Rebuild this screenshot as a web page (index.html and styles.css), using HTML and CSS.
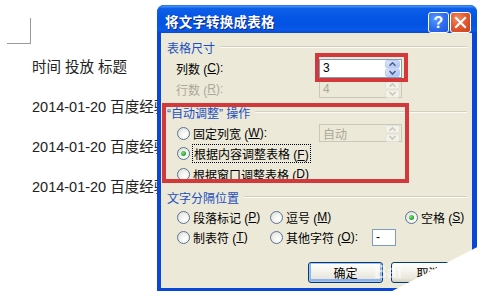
FILE: index.html
```html
<!DOCTYPE html>
<html lang="zh-CN">
<head>
<meta charset="utf-8">
<title>将文字转换成表格</title>
<link rel="stylesheet" href="styles.css">
</head>
<body>
<div class="page">
  <div class="doc">
    <div class="corner"></div>
    <p class="line">时间 投放 标题</p>
    <p class="line">2014-01-20 百度经验</p>
    <p class="line">2014-01-20 百度经验</p>
    <p class="line">2014-01-20 百度经验</p>
  </div>

  <div class="dialog">
    <div class="titlebar">
      <span class="title">将文字转换成表格</span>
      <div class="tbtns">
        <span class="tb help">?</span>
        <span class="tb close"><svg width="13" height="13" viewBox="0 0 13 13"><path d="M2 2 L11 11 M11 2 L2 11" stroke="#fff" stroke-width="2.2" stroke-linecap="square"/></svg></span>
      </div>
    </div>
    <div class="frame">
      <div class="body">
        <div class="legend l1"><span>表格尺寸</span><i></i></div>
        <div class="row r1">
          <span class="lab">列数 (<u>C</u>):</span>
          <div class="spin"><span class="val">3</span>
            <svg class="arr" width="15" height="17" viewBox="0 0 15 17"><defs><linearGradient id="sg" x1="0" y1="0" x2="1" y2="1"><stop offset="0" stop-color="#e2eafc"/><stop offset="1" stop-color="#a8bff2"/></linearGradient></defs><rect x="0.5" y="0.5" width="14" height="7.5" rx="2" fill="url(#sg)" stroke="#b8cbf4"/><rect x="0.5" y="9" width="14" height="7.5" rx="2" fill="url(#sg)" stroke="#b8cbf4"/><path d="M4.5 5.8 L7.5 2.8 L10.5 5.8" stroke="#4d6185" stroke-width="1.6" fill="none"/><path d="M4.5 11 L7.5 14 L10.5 11" stroke="#4d6185" stroke-width="1.6" fill="none"/></svg>
          </div>
        </div>
        <div class="row r2 dis">
          <span class="lab">行数 (<u>R</u>):</span>
          <div class="spin off"><span class="val">4</span>
            <svg class="arr" width="15" height="17" viewBox="0 0 15 17"><rect x="0.5" y="0.5" width="14" height="7.5" rx="2" fill="#f3f2ea" stroke="#e2e0d4"/><rect x="0.5" y="9" width="14" height="7.5" rx="2" fill="#f3f2ea" stroke="#e2e0d4"/><path d="M4.5 5.8 L7.5 2.8 L10.5 5.8" stroke="#c9c7ba" stroke-width="1.6" fill="none"/><path d="M4.5 11 L7.5 14 L10.5 11" stroke="#c9c7ba" stroke-width="1.6" fill="none"/></svg>
          </div>
        </div>

        <div class="legend l2"><span>“自动调整” 操作</span><i></i></div>
        <div class="row rr1">
          <span class="lab rl"><span class="radio"></span>固定列宽 (<u>W</u>):</span>
          <div class="spin off"><span class="val">自动</span>
            <svg class="arr" width="15" height="17" viewBox="0 0 15 17"><rect x="0.5" y="0.5" width="14" height="7.5" rx="2" fill="#f3f2ea" stroke="#e2e0d4"/><rect x="0.5" y="9" width="14" height="7.5" rx="2" fill="#f3f2ea" stroke="#e2e0d4"/><path d="M4.5 5.8 L7.5 2.8 L10.5 5.8" stroke="#c9c7ba" stroke-width="1.6" fill="none"/><path d="M4.5 11 L7.5 14 L10.5 11" stroke="#c9c7ba" stroke-width="1.6" fill="none"/></svg>
          </div>
        </div>
        <div class="row rr2">
          <span class="lab rl"><span class="radio on"></span><span class="focus">根据内容调整表格 (<u>F</u>)</span></span>
        </div>
        <div class="row rr3">
          <span class="lab rl"><span class="radio"></span>根据窗口调整表格 (<u>D</u>)</span>
        </div>

        <div class="legend l3"><span>文字分隔位置</span><i></i></div>
        <div class="sep">
          <span class="opt"><span class="radio"></span>段落标记 (<u>P</u>)</span>
          <span class="opt"><span class="radio"></span>逗号 (<u>M</u>)</span>
          <span class="opt"><span class="radio on"></span>空格 (<u>S</u>)</span>
          <span class="opt"><span class="radio"></span>制表符 (<u>T</u>)</span>
          <span class="opt"><span class="radio"></span>其他字符 (<u>O</u>):<span class="other">-</span></span>
          <span class="opt"></span>
        </div>

        <div class="buttons">
          <span class="btn def">确定</span>
          <span class="btn">取消</span>
        </div>

        <div class="hl hl1"></div>
        <div class="hl hl2"></div>
      </div>
    </div>
  </div>

  <div class="mark">Bai</div>
  <div class="curl"></div>
</div>
</body>
</html>
```
FILE: styles.css
```css
* { box-sizing: border-box; }
html, body { margin: 0; padding: 0; background: #fff; }
.page {
  position: relative;
  width: 487px;
  height: 304px;
  overflow: hidden;
  background: #fff;
}
.doc {
  padding-top: 18px;
  font-family: "Liberation Sans", "Noto Sans CJK SC", sans-serif;
  font-size: 14.5px;
  color: #222;
}
.corner {
  width: 24px;
  height: 26px;
  margin-left: 7px;
  border-right: 1px solid #9a9a9a;
  border-bottom: 1px solid #9a9a9a;
}
.line {
  margin: 0 0 0 32px;
  line-height: 40px;
  white-space: nowrap;
}
.corner + .line { margin-top: 3px; }

/* dialog */
.dialog {
  position: absolute;
  left: 157px;
  top: 5px;
  width: 320px;
  height: 286px;
  display: flex;
  flex-direction: column;
  border-radius: 7px 7px 0 0;
  background: #0a46d8;
  font-family: "Liberation Sans", "Noto Sans CJK SC", sans-serif;
  font-size: 12px;
  color: #000;
}
.titlebar {
  height: 28px;
  flex: none;
  display: flex;
  align-items: flex-start;
  padding: 0 6px 0 8px;
  border-radius: 7px 7px 0 0;
  background: linear-gradient(180deg, #4a98f6 0%, #0e60e9 9%, #0657e6 35%, #0453e3 70%, #0a5ae9 88%, #0a49d2 100%);
  border-top: 1px solid #2f78ee;
}
.title {
  font-family: "Noto Sans CJK SC", sans-serif;
  font-weight: bold;
  font-size: 13.5px;
  line-height: 18px;
  margin-top: 6px;
  color: #fff;
  letter-spacing: 0.2px;
  text-shadow: 1px 1px 0 #0b2b8a;
}
.tbtns {
  margin-left: auto;
  margin-top: 6px;
  display: flex;
  gap: 1px;
}
.tb {
  width: 21px;
  height: 21px;
  border: 1px solid #fff;
  border-radius: 3px;
  display: flex;
  align-items: center;
  justify-content: center;
  color: #fff;
}
.help {
  background: radial-gradient(circle at 35% 30%, #5a98ff 0%, #2f6ff0 50%, #1e54d8 100%);
  font-family: "Liberation Sans", sans-serif;
  font-weight: bold;
  font-size: 16px;
}
.close {
  background: radial-gradient(circle at 35% 30%, #f28a62 0%, #e2572e 50%, #c7401a 100%);
}
.frame {
  flex: 1;
  padding: 0 5px 3px 4px;
  display: flex;
}
.body {
  flex: 1;
  position: relative;
  background: #ece9d8;
  padding: 0 5px 0 6px;
  display: flex;
  flex-direction: column;
}

.legend {
  height: 16px;
  display: flex;
  align-items: center;
  color: #1c4fc0;
  white-space: nowrap;
}
.legend i {
  flex: 1;
  margin-left: 5px;
  height: 2px;
  border-top: 1px solid #d3d0bf;
  border-bottom: 1px solid #fbfbf8;
}
.l1 { margin-top: 6px; }
.l2 { margin-top: 5px; }
.l3 { margin-top: 5px; }

.row {
  height: 20px;
  display: grid;
  grid-template-columns: 152px 83px;
  align-items: center;
}
.lab {
  padding-left: 9px;
  white-space: nowrap;
  display: flex;
  align-items: center;
}
.rl { padding-left: 10px; }
.r1 { margin-top: 3px; }
.r2 { margin-top: 1px; }
.rr1 { margin-top: 3px; }
.rr3 { margin-top: 1px; }
.dis .lab { color: #aca899; }

.spin {
  width: 83px;
  height: 19px;
  border: 1px solid #7f9db9;
  background: #fff;
  display: flex;
  align-items: center;
  padding: 0 1px 0 3px;
}
.spin .val { flex: 1; }
.spin .arr { display: block; }
.spin.off {
  background: #ece9d8;
  border-color: #c9c7ba;
  color: #aca899;
  height: 18px;
}

.radio {
  width: 13px;
  height: 13px;
  border-radius: 50%;
  border: 1px solid #5d7393;
  background: radial-gradient(circle at 65% 65%, #fff 0%, #f4f4f0 40%, #d8d7cf 100%);
  margin-right: 3px;
  flex: none;
  display: flex;
  align-items: center;
  justify-content: center;
}
.radio.on::after {
  content: "";
  width: 5px;
  height: 5px;
  border-radius: 50%;
  background: radial-gradient(circle at 35% 35%, #7fe07f, #21a121 70%);
}
.focus {
  outline: 1px dotted #000;
  outline-offset: 0;
  padding: 0 1px;
}

.sep {
  margin-top: 2px;
  padding-left: 10px;
  display: grid;
  grid-template-columns: 93px 135px auto;
  grid-auto-rows: 20px;
}
.opt {
  display: flex;
  align-items: center;
  white-space: nowrap;
}
.other {
  margin-left: auto;
  margin-right: 9px;
  width: 24px;
  height: 17px;
  background: #fff;
  border: 1px solid #7f9db9;
  padding-left: 3px;
  line-height: 14px;
}

.buttons {
  margin-top: 15px;
  display: flex;
  justify-content: flex-end;
  gap: 8px;
  padding-right: 1px;
}
.btn {
  width: 75px;
  height: 21px;
  border: 1px solid #003c74;
  border-radius: 3px;
  background: linear-gradient(180deg, #ffffff 0%, #f5f4ee 40%, #e9e7dd 80%, #d6d0c4 100%);
  display: flex;
  align-items: center;
  justify-content: center;
}
.btn.def {
  box-shadow: inset 0 0 0 1px #a9c4f2, inset 0 -1px 0 2px #8db2ee;
}

.hl {
  position: absolute;
  border: 4px solid #d3393b;
}
.hl1 { left: 154px; top: 20px; width: 93px; height: 29px; }
.hl2 { left: 1px; top: 70px; width: 247px; height: 80px; }

.mark {
  position: absolute;
  left: 374px;
  top: 262px;
  font-family: "Liberation Sans", sans-serif;
  font-weight: bold;
  font-size: 18px;
  color: rgba(255, 255, 255, 0.55);
}
.curl {
  position: absolute;
  left: 360px;
  top: 236px;
  width: 127px;
  height: 68px;
  background: linear-gradient(160deg, #f0f0f0 0%, #fff 30%, #fff 100%);
  clip-path: polygon(7px 68px, 127px 6px, 127px 68px);
}
```
